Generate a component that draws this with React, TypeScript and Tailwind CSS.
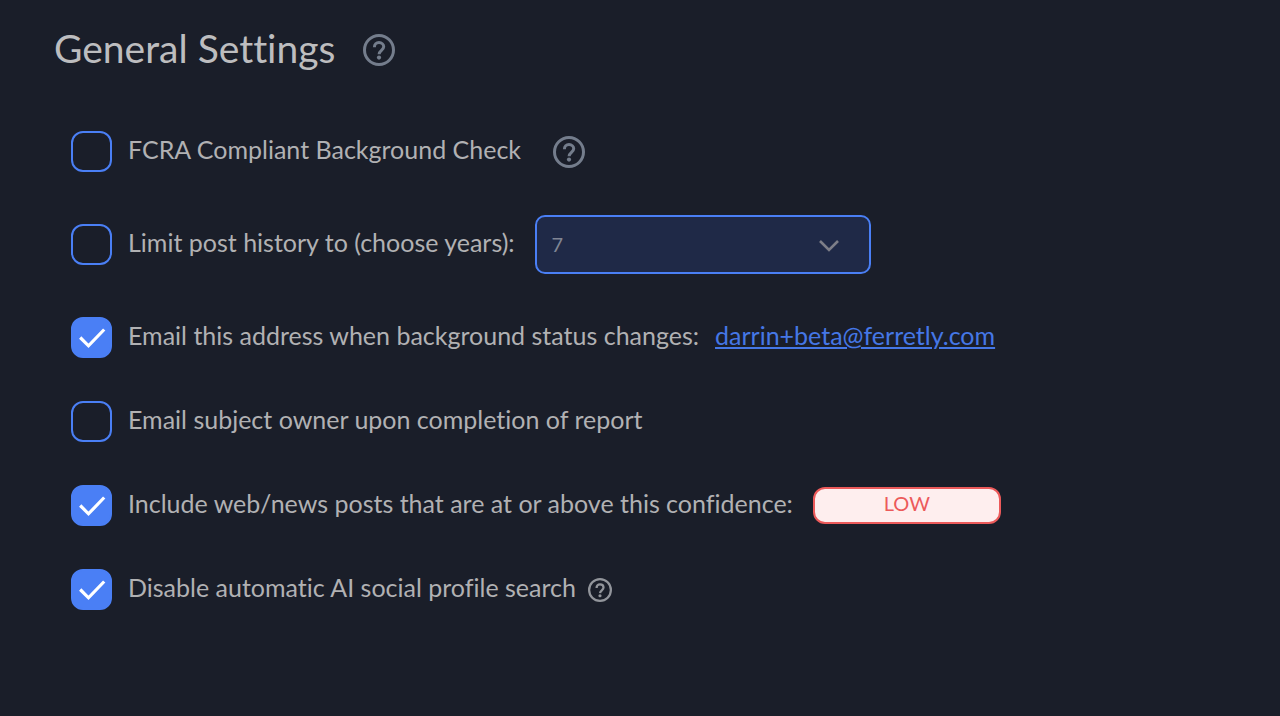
import { useState, type ReactNode } from 'react';

function HelpIcon({ className }: { className: string }) {
  return (
    <svg viewBox="0 0 32 32" fill="none" stroke="currentColor" strokeWidth="3" className={className} aria-hidden="true">
      <circle cx="16" cy="16" r="14.5" />
      <path d="M11.400 13.200C11.400 10.400 13.300 8.600 16 8.600c2.700 0 4.700 1.700 4.700 4.200 0 3.300-4.500 3.900-4.600 7.400" strokeWidth="3" />
      <circle cx="16" cy="23.600" r="2.100" fill="currentColor" stroke="none" />
    </svg>
  );
}

function HelpButton({ label, small = false }: { label: string; small?: boolean }) {
  return (
    <button
      type="button"
      aria-label={label}
      className={small ? 'shrink-0 text-[#92959b]' : 'shrink-0 text-[#747d8c]'}
    >
      <HelpIcon className={small ? 'block size-6' : 'block size-8'} />
    </button>
  );
}

type RowProps = {
  id: string;
  label: string;
  defaultChecked?: boolean;
  className?: string;
  children?: ReactNode;
};

function SettingRow({ id, label, defaultChecked = false, className = 'gap-4', children }: RowProps) {
  const [checked, setChecked] = useState(defaultChecked);
  return (
    <div className="flex items-center gap-4">
      <span className="relative block size-[41px] shrink-0">
        <input
          id={id}
          type="checkbox"
          checked={checked}
          onChange={(e) => setChecked(e.target.checked)}
          className="block size-full cursor-pointer appearance-none rounded-xl border-2 border-[#4a7ff5] checked:bg-[#4a7ff5]"
        />
        {checked && (
          <svg viewBox="0 0 41 41" fill="none" stroke="white" strokeWidth="3.200" className="pointer-events-none absolute inset-0 size-full" aria-hidden="true">
            <path d="M9.200 20.500l8.300 8.300L33.200 12.500" />
          </svg>
        )}
      </span>
      <div className={`flex items-center ${className}`}>
        <label htmlFor={id} className="pb-1.5 whitespace-nowrap">
          {label}
        </label>
        {children}
      </div>
    </div>
  );
}

export default function App() {
  return (
    <main className="min-h-screen bg-[#1a1e29] px-[54px] pt-6 pb-12 font-['Lato',sans-serif] text-[#b1b1b3] [font-variant-ligatures:none]">
      <header className="flex items-center gap-7">
        <h1 className="pb-1 text-[39px] leading-[48px] text-[#bdbdbf]">General Settings</h1>
        <HelpButton label="About general settings" />
      </header>

      <form className="mt-[55px] flex flex-col gap-[43px] pl-[17px] text-[25px] leading-8">
        <SettingRow id="fcra" label="FCRA Compliant Background Check" className="gap-8">
          <HelpButton label="About FCRA compliance" />
        </SettingRow>

        <SettingRow id="limit" label="Limit post history to (choose years):" className="gap-5">
          <div className="relative">
            <select
              aria-label="Years of post history"
              defaultValue="7"
              className="block h-[59px] w-[336px] appearance-none rounded-[10px] border-2 border-[#4a7ff5] bg-[#1f2947] px-[15px] pb-0.5 text-xl text-[#808594]"
            >
              <option>1</option>
              <option>3</option>
              <option>5</option>
              <option>7</option>
              <option>10</option>
            </select>
            <svg viewBox="0 0 20 12" fill="none" stroke="#7d7e88" strokeWidth="2.600" className="pointer-events-none absolute top-[25px] right-8 h-3 w-5" aria-hidden="true">
              <path d="M1 1l9 9 9-9" />
            </svg>
          </div>
        </SettingRow>

        <SettingRow id="status" label="Email this address when background status changes:" defaultChecked>
          <a href="mailto:darrin+beta@ferretly.com" className="pb-1.5 text-[#4577e6] underline decoration-2 underline-offset-2">
            darrin+beta@ferretly.com
          </a>
        </SettingRow>

        <SettingRow id="owner" label="Email subject owner upon completion of report" />

        <SettingRow id="confidence" label="Include web/news posts that are at or above this confidence:" defaultChecked className="gap-5">
          <button type="button" aria-label="Confidence: LOW" className="h-[37px] w-[188px] rounded-xl border-2 border-[#ec5a5a] bg-[#feeeee] pb-1.5 text-xl leading-7 text-[#ec5a5a]">
            LOW
          </button>
        </SettingRow>

        <SettingRow id="ai" label="Disable automatic AI social profile search" defaultChecked className="gap-3">
          <HelpButton label="About AI social profile search" small />
        </SettingRow>
      </form>
    </main>
  );
}
